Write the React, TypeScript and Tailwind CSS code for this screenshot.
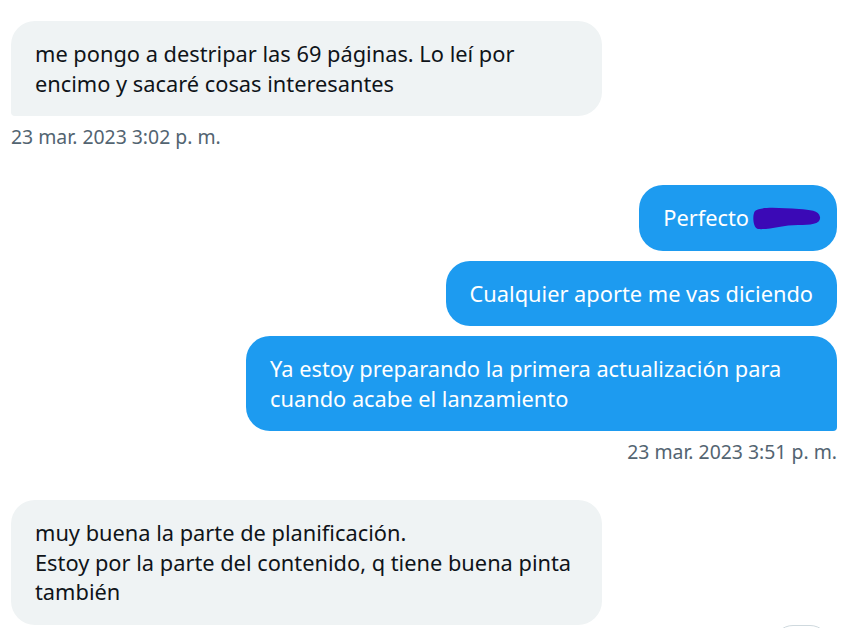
const font = { fontFamily: '"Noto Sans", "Open Sans", Arial, sans-serif' };

const Redacted = () => (
  <svg width="68" height="24" viewBox="0 0 68 24" className="inline-block align-middle -mr-2 ml-1 -mt-1">
    <path
      d="M2 5 C8 0 28 2 46 3 C57 4 66 4 67 11 C68 18 58 19 45 19 C30 19 16 24 5 23 C0 22 -1 9 2 5 Z"
      fill="#3b09b6"
    />
  </svg>
);

const Received = ({ children, last }: { children: React.ReactNode; last?: boolean }) => (
  <div className="flex justify-start">
    <div
      className={
        "max-w-[591px] bg-[#eff3f4] text-[#0f1419] px-6 py-[18px] text-[21.8px] leading-[29.5px] rounded-[24px] " +
        (last ? "rounded-bl-[4px]" : "")
      }
    >
      {children}
    </div>
  </div>
);

const Sent = ({ children, last }: { children: React.ReactNode; last?: boolean }) => (
  <div className="flex justify-end">
    <div
      className={
        "max-w-[591px] bg-[#1d9bf0] text-white px-6 py-[18px] text-[21.8px] leading-[29.5px] rounded-[24px] " +
        (last ? "rounded-br-[4px]" : "")
      }
    >
      {children}
    </div>
  </div>
);

const Stamp = ({ text, right }: { text: string; right?: boolean }) => (
  <div className={"mt-[9px] text-[19.4px] leading-6 text-[#536471] " + (right ? "text-right" : "")}>{text}</div>
);

export default function App() {
  return (
    <div className="relative h-[628px] w-[847px] overflow-hidden bg-white" style={font}>
      <div className="flex flex-col pl-[11px] pr-[10px] pt-[21px]">
        <Received last>
          me pongo a destripar las 69 páginas. Lo leí por encimo y sacaré cosas interesantes
        </Received>
        <Stamp text="23 mar. 2023 3:02 p. m." />

        <div className="mt-[36px] flex flex-col gap-[10px]">
          <Sent>
            Perfecto
            <Redacted />
          </Sent>
          <Sent>Cualquier aporte me vas diciendo</Sent>
          <Sent last>Ya estoy preparando la primera actualización para cuando acabe el lanzamiento</Sent>
        </div>
        <Stamp text="23 mar. 2023 3:51 p. m." right />

        <div className="mt-[36px]">
          <Received>
            muy buena la parte de planificación.
            <br />
            Estoy por la parte del contenido, q tiene buena pinta también
          </Received>
        </div>
      </div>
      <div className="absolute left-[773px] top-[625px] h-10 w-[57px] rounded-full border border-[#cfd9de] bg-white" />
    </div>
  );
}
